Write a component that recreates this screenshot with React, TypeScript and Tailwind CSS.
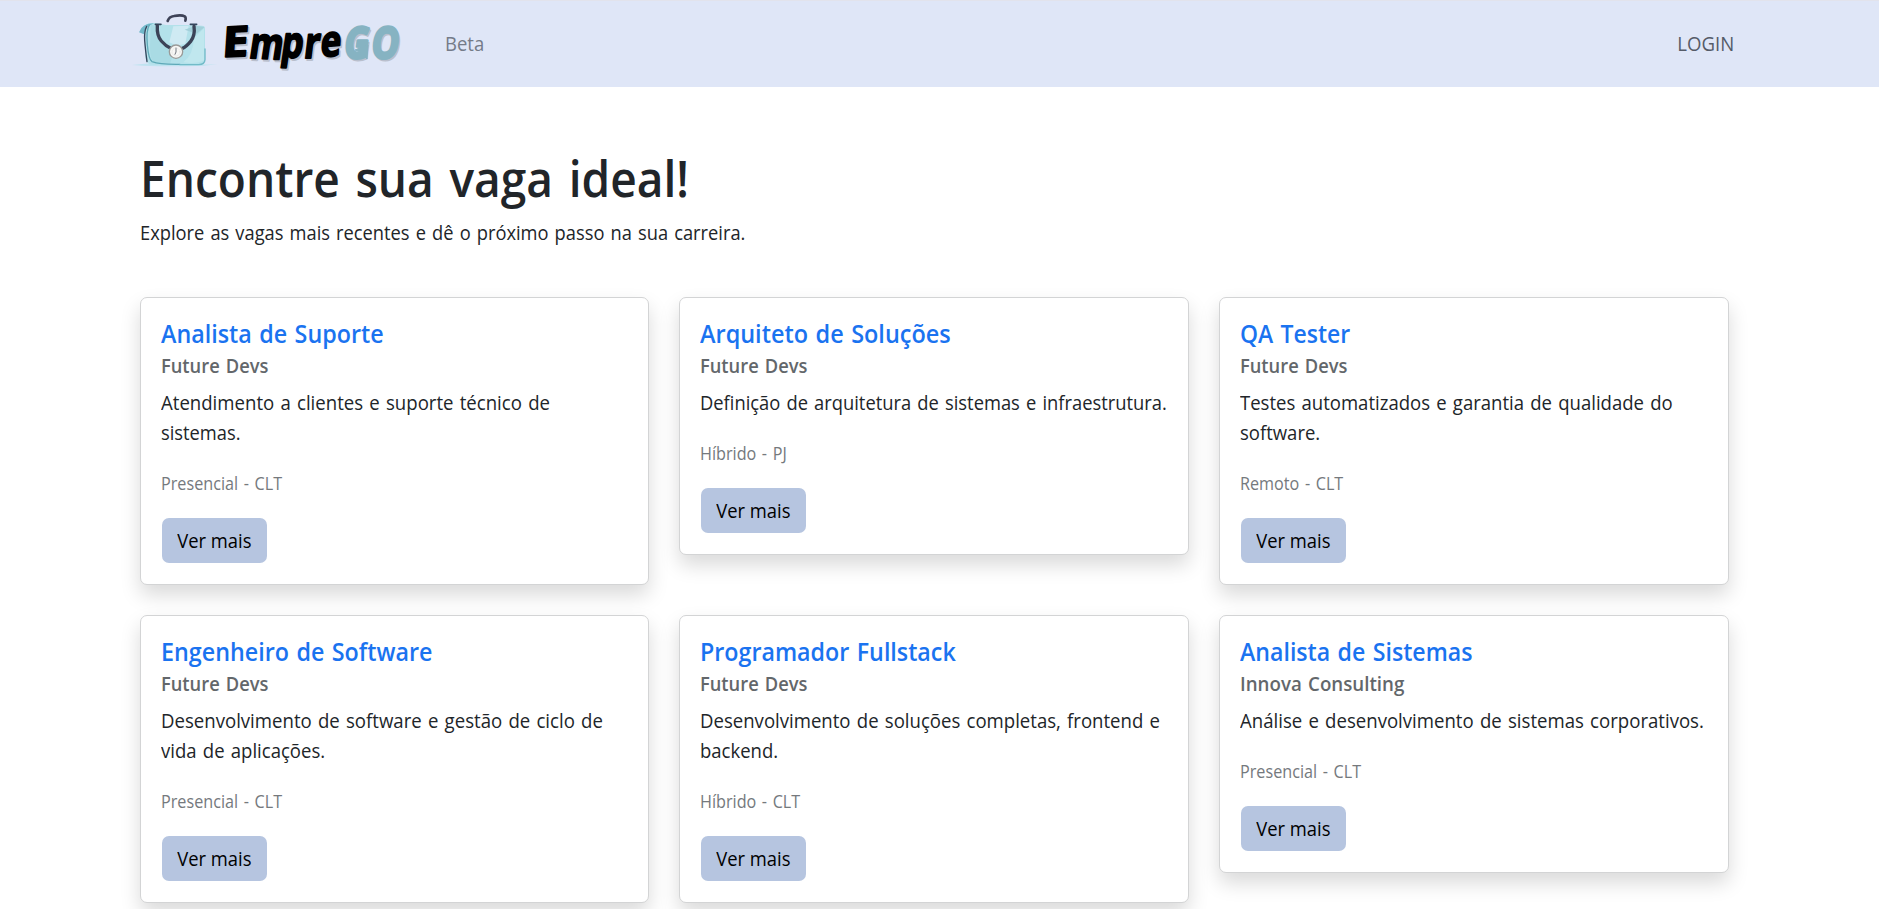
type Line = { t: string; sx: string };
type Job = { title: string; titleSx: string; company: string; companySx: string; text: Line[]; kind: string };

const FD = 'scale-x-[0.915]';

const jobs: Job[] = [
  {
    title: 'Analista de Suporte', titleSx: 'scale-x-[0.932]', company: 'Future Devs', companySx: FD, kind: 'Presencial - CLT',
    text: [{ t: 'Atendimento a clientes e suporte técnico de', sx: 'scale-x-[0.93]' }, { t: 'sistemas.', sx: 'scale-x-[0.915]' }],
  },
  {
    title: 'Arquiteto de Soluções', titleSx: 'scale-x-[0.938]', company: 'Future Devs', companySx: FD, kind: 'Híbrido - PJ',
    text: [{ t: 'Definição de arquitetura de sistemas e infraestrutura.', sx: 'scale-x-[0.917]' }],
  },
  {
    title: 'QA Tester', titleSx: 'scale-x-[0.918]', company: 'Future Devs', companySx: FD, kind: 'Remoto - CLT',
    text: [{ t: 'Testes automatizados e garantia de qualidade do', sx: 'scale-x-[0.927]' }, { t: 'software.', sx: 'scale-x-[0.925]' }],
  },
  {
    title: 'Engenheiro de Software', titleSx: 'scale-x-[0.932]', company: 'Future Devs', companySx: FD, kind: 'Presencial - CLT',
    text: [{ t: 'Desenvolvimento de software e gestão de ciclo de', sx: 'scale-x-[0.93]' }, { t: 'vida de aplicações.', sx: 'scale-x-[0.927]' }],
  },
  {
    title: 'Programador Fullstack', titleSx: 'scale-x-[0.93]', company: 'Future Devs', companySx: FD, kind: 'Híbrido - CLT',
    text: [{ t: 'Desenvolvimento de soluções completas, frontend e', sx: 'scale-x-[0.929]' }, { t: 'backend.', sx: 'scale-x-[0.925]' }],
  },
  {
    title: 'Analista de Sistemas', titleSx: 'scale-x-[0.926]', company: 'Innova Consulting', companySx: 'scale-x-[0.936]', kind: 'Presencial - CLT',
    text: [{ t: 'Análise e desenvolvimento de sistemas corporativos.', sx: 'scale-x-[0.93]' }],
  },
];

function Bag() {
  return (
    <svg viewBox="0 0 270 210" className="h-[70px] w-[90px]" fill="none" strokeLinecap="round" strokeLinejoin="round">
      <path d="M6 180Q60 172 130 176T262 178L222 182Q120 186 40 182Z" fill="#bfe3f0" />
      <path d="M44 62Q50 53 76 54L108 60H170L216 62Q225 62 225 72V166Q225 179 212 179H66Q50 178 46 158Z" fill="#b3e1ea" />
      <path d="M62 60L82 62 90 104Q104 124 138 122L120 176 70 170Q60 160 60 130Z" fill="#a9dbe4" />
      <path d="M130 64L176 62 166 116 140 122 118 112Z" fill="#cfeaf3" />
      <path d="M192 100L222 70V166Q200 178 160 172Q190 150 192 100Z" fill="#c0e7ee" />
      <path d="M27 82Q36 55 72 55L48 67 42 88Z" fill="#72b8ca" />
      <path d="M58 60Q48 76 52 120T66 170Q90 179 150 178" stroke="#5fa9b8" strokeWidth="4" />
      <path d="M50 64Q42 80 44 106T51 170" stroke="#35475e" strokeWidth="4" />
      <path d="M225 132V164Q224 179 206 179H150" stroke="#72bbc8" strokeWidth="4" />
      <path d="M164 74L196 62 224 66 200 86Z" fill="#a3d0da" />
      <path d="M113 48Q117 35 132 33Q155 29 164 34Q169 38 166 47" stroke="#3d4257" strokeWidth="8" />
      <path d="M76 58L93 58M181 58L200 58" stroke="#35475e" strokeWidth="5" />
      <path d="M82 62Q80 92 94 108T122 130" stroke="#3b4357" strokeWidth="10" />
      <path d="M192 64Q196 92 182 109T157 130" stroke="#3b4357" strokeWidth="10" />
      <circle cx="138" cy="140" r="20" fill="#f7f7f5" stroke="#9a9a98" strokeWidth="4" />
      <path d="M138 129V141L135 148" stroke="#555b66" strokeWidth="2.5" />
      <circle cx="138" cy="141" r="12" stroke="#c9c9c9" strokeWidth="1.5" strokeDasharray="1 5" />
    </svg>
  );
}

function Letters() {
  return (
    <>
      <text transform="translate(7 0) skewX(-7) scale(1.1 1)" x="201.5" y="57" rotate="-3" fontSize="42">E</text>
      <text transform="translate(7 0) skewX(-7) scale(.8 1)" x="310 350 379 400" y="58 57 58 57" rotate="2 2 0 -4">mpre</text>
    </>
  );
}

function Wordmark() {
  const slant = 'translate(7 0) skewX(-7) scale(.8 1)';
  return (
    <svg viewBox="220 10 190 65" className="h-[65px] w-[190px] font-['Open_Sans',sans-serif] font-bold" fontSize="43" strokeLinejoin="round">
      <g transform="translate(1.5 2)" fill="#b9bfcd" stroke="#b9bfcd" strokeWidth="2">
        <Letters />
        <text transform={slant} x="429 463" y="58">GO</text>
      </g>
      <g fill="#000" stroke="#000" strokeWidth="2">
        <Letters />
      </g>
      <g fill="#86b3c2" stroke="#86b3c2">
        <text transform={slant} x="429 463" y="58" strokeWidth="3">GO</text>
        <path d="M355 50L368 45 367 59 363 53Z" strokeWidth="1" />
      </g>
    </svg>
  );
}

export default function App() {
  return (
    <div className="h-[909px] overflow-hidden bg-white font-['Open_Sans',sans-serif] text-[20px] leading-[30px] text-[#212529] [word-spacing:1.5px]">
      <header className="flex h-[87px] items-start border-t border-[#e2e3ec] bg-[#dfe6f7] pr-[145px] pl-[130px]">
        <div className="flex pt-1">
          <Bag />
          <div className="mt-[5px]"><Wordmark /></div>
        </div>
        <span className="mt-7 ml-[35px] origin-left scale-x-[0.925] text-[#747b89]">Beta</span>
        <span className="mt-7 ml-auto origin-right scale-x-[0.93] text-[#555b68]">LOGIN</span>
      </header>
      <main className="pt-[61px] pl-[139.7px]">
        <h1 className="mb-[10px] w-max origin-left scale-x-[0.921] text-[50px] leading-[60px] font-semibold [word-spacing:4px]">Encontre sua vaga ideal!</h1>
        <p className="w-max origin-left scale-x-[0.914]">Explore as vagas mais recentes e dê o próximo passo na sua carreira.</p>
        <div className="mt-[49px] grid w-[1589px] grid-cols-3 items-start gap-[30px]">
          {jobs.map((j) => (
            <article key={j.title} className="rounded-[7px] border border-[#d3d4d5] bg-white p-5 pb-[21px] shadow-[0_10px_20px_rgba(0,0,0,0.15)]">
              <h2 className={`mb-[6px] w-max origin-left text-[25px] leading-[30px] font-semibold text-[#1a73f0] ${j.titleSx}`}>{j.title}</h2>
              <h3 className={`mb-[10px] w-max origin-left text-[20px] leading-6 font-semibold text-[#63676b] ${j.companySx}`}>{j.company}</h3>
              <p className="mb-5">
                {j.text.map((l) => (
                  <span key={l.t} className={`block w-max origin-left whitespace-nowrap ${l.sx}`}>{l.t}</span>
                ))}
              </p>
              <p className="mb-5 w-max origin-left scale-x-[0.925] text-[17.5px] text-[#75797d]">{j.kind}</p>
              <button className="ml-px flex h-[45px] w-[105px] items-center justify-center rounded-[7px] bg-[#b6c5e0] text-black">
                <span className="w-max shrink-0 scale-x-[0.92]">Ver mais</span>
              </button>
            </article>
          ))}
        </div>
      </main>
    </div>
  );
}
